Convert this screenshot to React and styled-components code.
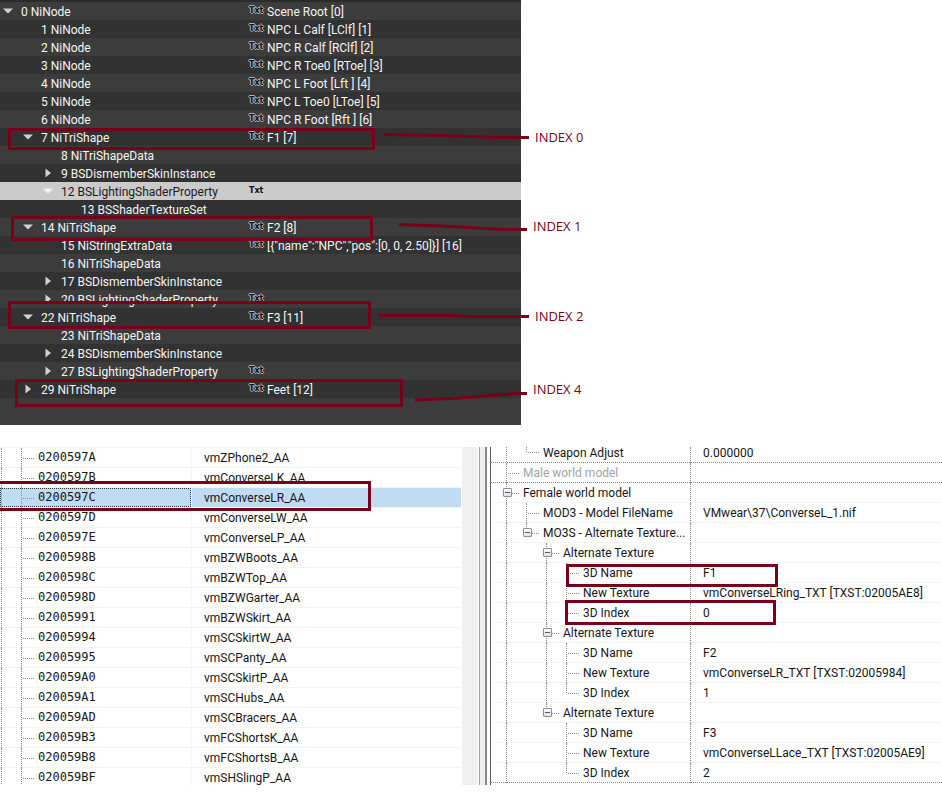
import React, { useState } from "react";
import styled, { createGlobalStyle, css } from "styled-components";

const colors = {
  mark: "#780019",
  stripeLight: "#3c3c3c",
  stripeDark: "#323232",
  selected: "#cbcbcb",
  highlight: "#bfdcf3",
  gridLine: "#f4f4f4",
  dots: "#8c8c8c",
};

const GlobalStyle = createGlobalStyle`
  * {
    box-sizing: border-box;
  }

  body {
    margin: 0;
    background: #fff;
    font-family: Roboto, "Open Sans", sans-serif;
    font-size: 12px;
    line-height: 18px;
  }
`;

const Page = styled.main`
  position: relative;
  display: flex;
  flex-direction: column;
  gap: 22px;
  overflow: hidden;
`;

/* block tree */

const BlockTree = styled.ul`
  width: 55.3%;
  margin: 0;
  padding: 0 0 27px;
  list-style: none;
  color: #f4f4f4;
  background: ${colors.stripeLight};
  border-top: 2px solid #2b2b2b;
`;

const BlockRow = styled.li`
  display: grid;
  grid-template-columns: 249px 1fr;
  height: 18px;
  line-height: 20px;
  white-space: nowrap;

  &:nth-child(even) {
    background: ${colors.stripeDark};
  }

  ${({ $selected }) =>
    $selected &&
    css`
      &&& {
        color: #1e1a26;
        background: ${colors.selected};
      }
    `}
`;

const BlockName = styled.div`
  display: flex;
  padding-left: ${({ $depth }) => $depth * 20}px;
`;

const BlockValue = styled.div`
  display: flex;
  gap: 4px;
`;

const Arrow = styled.button`
  display: flex;
  align-items: center;
  justify-content: center;
  width: 15px;
  height: 18px;
  margin-right: 6px;
  padding: 0;
  border: 0;
  color: ${({ $selected }) => ($selected ? "#f2f2f2" : "#d2d2d2")};
  background: none;
`;

const ArrowSpace = styled.span`
  width: 21px;
`;

const TxtIcon = styled.span`
  width: 14px;
  color: #111;
  font: bold 8px/18px "DejaVu Sans", sans-serif;
  ${({ $selected }) =>
    !$selected &&
    css`
      text-shadow: 1px 0 #b4b4b4, -1px 0 #b4b4b4, 0 1px #b4b4b4, 0 -1px #b4b4b4;
    `}
`;

/* record list and record view */

const Editor = styled.section`
  display: grid;
  grid-template-columns: minmax(0, 461fr) 29px minmax(0, 452fr);
`;

const RecordPane = styled.div`
  overflow: hidden;
`;

const Table = styled.table`
  width: 100%;
  table-layout: fixed;
  border-collapse: separate;
  border-spacing: 0;
  color: #161616;
  white-space: nowrap;

  td,
  th {
    height: 20px;
    padding: 0;
    text-align: left;
    font-weight: normal;
  }
`;

const RecordTable = styled(Table)`
  margin-bottom: -2px;

  td,
  th {
    border-top: 1px solid ${colors.gridLine};
  }
`;

const RecordRow = styled.tr`
  ${({ $selected }) =>
    $selected &&
    css`
      background: ${colors.highlight};

      th > div {
        outline: 1px dotted #333;
        outline-offset: -1px;
      }
    `}
`;

const FormId = styled.div`
  display: flex;
  height: 19px;
  padding-left: 1px;
  font: 12px/19px "DejaVu Sans Mono", monospace;
`;

const EditorId = styled.td`
  && {
    padding-left: 12px;
    border-left: 1px solid ${colors.gridLine};
  }
`;

const Scroller = styled.div`
  display: grid;
  grid-template-columns: 1px 16px 1px 1px 5px 2px 3px;

  span:nth-child(2),
  span:nth-child(5) {
    background: #efefef;
  }

  span:nth-child(4) {
    background: #a0a0a0;
  }

  span:nth-child(6) {
    background: #8a8a8a;
  }
`;

const ViewPane = styled.div`
  padding-bottom: 2px;
  border-left: 1px solid #5c5c5c;
`;

const ViewLabel = styled.div`
  display: flex;
  height: 19px;
  padding-left: 15px;
  line-height: 20px;
`;

const ViewValue = styled.td`
  && {
    padding-left: 12px;
    border-left: 1px dotted ${colors.dots};
  }
`;

const Guide = styled.span`
  position: relative;
  flex: none;
  width: ${({ $stub }) => ($stub ? 17 : 20)}px;
  height: 20px;

  &::before {
    content: "";
    position: absolute;
    top: 0;
    left: 0;
    height: ${({ $line }) => ($line === "half" ? 10 : 20)}px;
    border-left: ${({ $line }) => ($line ? `1px dotted ${colors.dots}` : 0)};
  }

  &::after {
    content: "";
    position: absolute;
    top: 10px;
    left: 2px;
    width: 11px;
    border-top: ${({ $stub }) => ($stub ? `1px dotted ${colors.dots}` : 0)};
  }
`;

const ViewRow = styled.tr`
  color: ${({ $muted }) => ($muted ? "#a3a3a3" : "inherit")};

  td,
  th {
    border-bottom: ${({ $section }) =>
      $section ? `1px dotted ${colors.dots}` : `1px solid ${colors.gridLine}`};
  }

  /* top row is partly scrolled away */
  &:first-child {
    td,
    th {
      height: 16px;
      line-height: 12px;
      vertical-align: top;
    }

    ${ViewLabel} {
      height: 15px;
      line-height: 12px;
    }

    ${Guide} {
      align-self: flex-end;
      clip-path: inset(5px 0 0 0);
    }
  }
`;

const Collapse = styled.button`
  position: absolute;
  z-index: 1;
  top: 5px;
  left: -3px;
  width: 9px;
  height: 9px;
  padding: 0;
  border: 1px solid #8e8e8e;
  border-radius: 1px;
  background: linear-gradient(#44588c, #44588c) center / 5px 1px no-repeat,
    linear-gradient(#fff, #e2e2e2);
`;

/* annotations drawn over both windows */

const Frame = styled.div`
  position: absolute;
  left: ${({ $x }) => $x}px;
  top: ${({ $y }) => $y}px;
  width: ${({ $w }) => $w}px;
  height: ${({ $h }) => $h}px;
  border: 3px solid ${colors.mark};
  pointer-events: none;
`;

const Strokes = styled.svg`
  position: absolute;
  top: 0;
  left: 0;
  pointer-events: none;
`;

const Callout = styled.span`
  position: absolute;
  left: ${({ $x }) => $x}px;
  top: ${({ $y }) => $y}px;
  color: ${colors.mark};
  font-family: "Open Sans", sans-serif;
  font-size: 13px;
`;

const blocks = [
  { depth: 0, name: "0 NiNode", arrow: "down", txt: true, value: "Scene Root [0]" },
  { depth: 1, name: "1 NiNode", txt: true, value: "NPC L Calf [LClf] [1]" },
  { depth: 1, name: "2 NiNode", txt: true, value: "NPC R Calf [RClf] [2]" },
  { depth: 1, name: "3 NiNode", txt: true, value: "NPC R Toe0 [RToe] [3]" },
  { depth: 1, name: "4 NiNode", txt: true, value: "NPC L Foot [Lft ] [4]" },
  { depth: 1, name: "5 NiNode", txt: true, value: "NPC L Toe0 [LToe] [5]" },
  { depth: 1, name: "6 NiNode", txt: true, value: "NPC R Foot [Rft ] [6]" },
  { depth: 1, name: "7 NiTriShape", arrow: "down", txt: true, value: "F1 [7]" },
  { depth: 2, name: "8 NiTriShapeData" },
  { depth: 2, name: "9 BSDismemberSkinInstance", arrow: "right" },
  { depth: 2, name: "12 BSLightingShaderProperty", arrow: "down", txt: true },
  { depth: 3, name: "13 BSShaderTextureSet" },
  { depth: 1, name: "14 NiTriShape", arrow: "down", txt: true, value: "F2 [8]" },
  { depth: 2, name: "15 NiStringExtraData", txt: true, value: '[{"name":"NPC","pos":[0, 0, 2.50]}] [16]' },
  { depth: 2, name: "16 NiTriShapeData" },
  { depth: 2, name: "17 BSDismemberSkinInstance", arrow: "right" },
  { depth: 2, name: "20 BSLightingShaderProperty", arrow: "right", txt: true },
  { depth: 1, name: "22 NiTriShape", arrow: "down", txt: true, value: "F3 [11]" },
  { depth: 2, name: "23 NiTriShapeData" },
  { depth: 2, name: "24 BSDismemberSkinInstance", arrow: "right" },
  { depth: 2, name: "27 BSLightingShaderProperty", arrow: "right", txt: true },
  { depth: 1, name: "29 NiTriShape", arrow: "right", txt: true, value: "Feet [12]" },
];

const records = [
  ["0200597A", "vmZPhone2_AA"],
  ["0200597B", "vmConverseLK_AA"],
  ["0200597C", "vmConverseLR_AA"],
  ["0200597D", "vmConverseLW_AA"],
  ["0200597E", "vmConverseLP_AA"],
  ["0200598B", "vmBZWBoots_AA"],
  ["0200598C", "vmBZWTop_AA"],
  ["0200598D", "vmBZWGarter_AA"],
  ["02005991", "vmBZWSkirt_AA"],
  ["02005994", "vmSCSkirtW_AA"],
  ["02005995", "vmSCPanty_AA"],
  ["020059A0", "vmSCSkirtP_AA"],
  ["020059A1", "vmSCHubs_AA"],
  ["020059AD", "vmSCBracers_AA"],
  ["020059B3", "vmFCShortsK_AA"],
  ["020059B8", "vmFCShortsB_AA"],
  ["020059BF", "vmSHSlingP_AA"],
];

// guides: "|" line, " " empty, "+" branch, "L" last branch,
// "B" branch with collapse box, "E" last branch with collapse box
const fields = [
  { guides: "|L", label: "Weapon Adjust", value: "0.000000", section: true },
  { guides: "+", label: "Male world model", muted: true, section: true },
  { guides: "B", label: "Female world model" },
  { guides: "|+", label: "MOD3 - Model FileName", value: "VMwear\\37\\ConverseL_1.nif" },
  { guides: "|E", label: "MO3S - Alternate Texture..." },
  { guides: "| B", label: "Alternate Texture" },
  { guides: "| |+", label: "3D Name", value: "F1" },
  { guides: "| |+", label: "New Texture", value: "vmConverseLRing_TXT [TXST:02005AE8]" },
  { guides: "| |L", label: "3D Index", value: "0" },
  { guides: "| B", label: "Alternate Texture" },
  { guides: "| |+", label: "3D Name", value: "F2" },
  { guides: "| |+", label: "New Texture", value: "vmConverseLR_TXT [TXST:02005984]" },
  { guides: "| |L", label: "3D Index", value: "1" },
  { guides: "| E", label: "Alternate Texture" },
  { guides: "|  +", label: "3D Name", value: "F3" },
  { guides: "|  +", label: "New Texture", value: "vmConverseLLace_TXT [TXST:02005AE9]" },
  { guides: "|  L", label: "3D Index", value: "2", section: true },
];

const frames = [
  [8, 128, 367, 22],
  [11, 216, 362, 25],
  [8, 301, 363, 28],
  [15, 379, 388, 28],
  [-4, 481, 375, 30],
  [566, 564, 212, 23],
  [565, 600, 211, 25],
];

const callouts = [
  { text: "INDEX 0", x: 535, y: 128, path: "M384 134.5L440 135.5L500 137.5H529" },
  { text: "INDEX 1", x: 533, y: 217, path: "M399 224.5L440 226L505 229.5H527" },
  { text: "INDEX 2", x: 535, y: 307, path: "M379 315.5H450L470 316.5H529" },
  { text: "INDEX 4", x: 533, y: 380, path: "M415 400L460 398L515 393.5H527" },
];

const Guides = ({ guides, label }) =>
  guides.split("").map((kind, i) => (
    <Guide
      key={i}
      $line={kind === " " ? null : "LE".includes(kind) ? "half" : "full"}
      $stub={"+LBE".includes(kind)}
    >
      {"BE".includes(kind) && <Collapse aria-label={`Collapse ${label}`} />}
    </Guide>
  ));

const Block = ({ block, selected, onSelect }) => (
  <BlockRow $selected={selected} onClick={onSelect}>
    <BlockName $depth={block.depth}>
      {block.arrow ? (
        <Arrow $selected={selected} aria-label={`Toggle ${block.name}`}>
          <svg width="10" height="10" viewBox="0 0 10 10" fill="currentColor">
            <path d={block.arrow === "down" ? "M0 2.5H10L5 7.5Z" : "M2.5 0.5V9.5L8 5Z"} />
          </svg>
        </Arrow>
      ) : (
        <ArrowSpace />
      )}
      {block.name}
    </BlockName>
    <BlockValue>
      {block.txt && <TxtIcon $selected={selected}>Txt</TxtIcon>}
      {block.value}
    </BlockValue>
  </BlockRow>
);

const App = () => {
  const [block, setBlock] = useState(10);
  const [record, setRecord] = useState("0200597C");

  return (
    <Page>
      <GlobalStyle />
      <BlockTree>
        {blocks.map((item, i) => (
          <Block
            key={item.name}
            block={item}
            selected={i === block}
            onSelect={() => setBlock(i)}
          />
        ))}
      </BlockTree>

      <Editor>
        <RecordPane>
          <RecordTable>
            <colgroup>
              <col width="191" />
              <col />
            </colgroup>
            <tbody>
              {records.map(([id, name]) => (
                <RecordRow
                  key={id}
                  $selected={id === record}
                  onClick={() => setRecord(id)}
                >
                  <th scope="row">
                    <FormId>
                      <Guide $line="full" />
                      <Guide $line="full" $stub />
                      {id}
                    </FormId>
                  </th>
                  <EditorId>{name}</EditorId>
                </RecordRow>
              ))}
            </tbody>
          </RecordTable>
        </RecordPane>
        <Scroller>
          {[0, 1, 2, 3, 4, 5, 6].map((i) => (
            <span key={i} />
          ))}
        </Scroller>
        <ViewPane>
          <Table>
            <colgroup>
              <col width="199" />
              <col />
            </colgroup>
            <tbody>
              {fields.map((field, i) => (
                <ViewRow key={i} $muted={field.muted} $section={field.section}>
                  <th scope="row">
                    <ViewLabel>
                      <Guides guides={field.guides} label={field.label} />
                      {field.label}
                    </ViewLabel>
                  </th>
                  <ViewValue>{field.value}</ViewValue>
                </ViewRow>
              ))}
            </tbody>
          </Table>
        </ViewPane>
      </Editor>

      {frames.map(([x, y, w, h]) => (
        <Frame key={y} $x={x} $y={y} $w={w} $h={h} />
      ))}
      <Strokes width="600" height="425" fill="none" stroke={colors.mark} strokeWidth="3">
        {callouts.map(({ text, path }) => (
          <path key={text} d={path} />
        ))}
      </Strokes>
      {callouts.map(({ text, x, y }) => (
        <Callout key={text} $x={x} $y={y}>
          {text}
        </Callout>
      ))}
    </Page>
  );
};

export default App;
